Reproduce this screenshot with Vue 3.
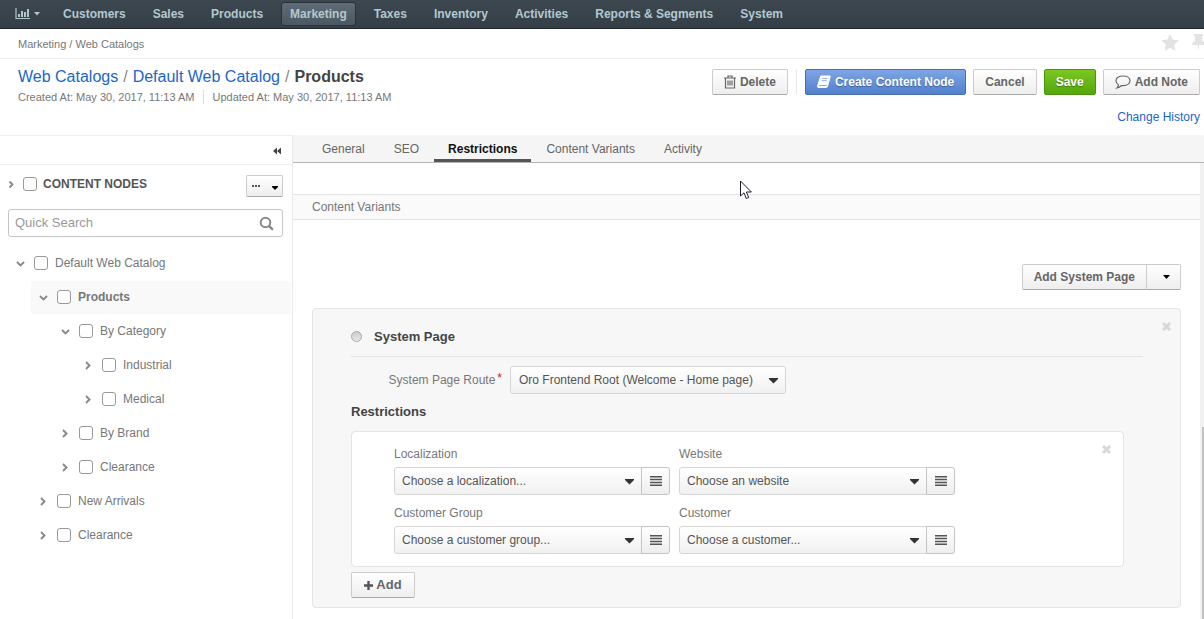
<script setup>
import { ref } from 'vue'

const navItems = ['Customers', 'Sales', 'Products', 'Marketing', 'Taxes', 'Inventory', 'Activities', 'Reports & Segments', 'System']
const activeNav = ref('Marketing')

const tabs = ['General', 'SEO', 'Restrictions', 'Content Variants', 'Activity']
const activeTab = ref('Restrictions')

const nodes = ref([
  { id: 'root', label: 'Default Web Catalog', level: 0, open: true, checked: false },
  { id: 'products', label: 'Products', level: 1, open: true, checked: false, current: true },
  { id: 'by-category', label: 'By Category', level: 2, open: true, checked: false },
  { id: 'industrial', label: 'Industrial', level: 3, open: false, checked: false },
  { id: 'medical', label: 'Medical', level: 3, open: false, checked: false },
  { id: 'by-brand', label: 'By Brand', level: 2, open: false, checked: false },
  { id: 'clearance-products', label: 'Clearance', level: 2, open: false, checked: false },
  { id: 'new-arrivals', label: 'New Arrivals', level: 1, open: false, checked: false },
  { id: 'clearance', label: 'Clearance', level: 1, open: false, checked: false },
])

const restrictions = [
  { id: 'localization', label: 'Localization', placeholder: 'Choose a localization...' },
  { id: 'website', label: 'Website', placeholder: 'Choose an website' },
  { id: 'customer-group', label: 'Customer Group', placeholder: 'Choose a customer group...' },
  { id: 'customer', label: 'Customer', placeholder: 'Choose a customer...' },
]
</script>

<template>
  <div class="page">
    <nav class="topbar" aria-label="Main">
      <button class="dash" type="button" aria-label="Dashboards">
        <svg width="15" height="12" viewBox="0 0 15 12" aria-hidden="true">
          <path d="M1 0v10.5h14" fill="none" stroke="currentColor" stroke-width="1.2" />
          <path d="M3 6h2v3H3zM6 3h2v6H6zM9 4h2v5H9zM12 1h2v8h-2z" fill="currentColor" />
        </svg>
        <svg width="6" height="4" viewBox="0 0 6 4" aria-hidden="true"><path d="M0 0h6L3 3.5z" fill="currentColor" /></svg>
      </button>
      <a v-for="item in navItems" :key="item" href="#" class="nav-item" :class="{ active: item === activeNav }" @click.prevent="activeNav = item">{{ item }}</a>
    </nav>

    <div class="crumbs">
      <span>Marketing / Web Catalogs</span>
      <div class="marks">
        <button type="button" class="plain" aria-label="Favorite">
          <svg width="18" height="17" viewBox="0 0 18 17" aria-hidden="true"><path d="M9 0l2.6 5.6 6.1.8-4.5 4.2 1.2 6.1L9 13.7l-5.4 3 1.2-6.1L.3 6.4l6.1-.8z" fill="#e3e3e3" /></svg>
        </button>
        <button type="button" class="plain pin" aria-label="Pin">
          <svg width="13" height="17" viewBox="0 0 13 17" aria-hidden="true"><path d="M2 0h9v2H10v5c2 .8 3 2.200 3 4H7.300L6.500 17 5.700 11H0C0 9.200 1 7.800 3 7V2H2z" fill="#e3e3e3" /></svg>
        </button>
      </div>
    </div>

    <header class="head">
      <div class="head-text">
        <h1 class="title">
          <a href="#">Web Catalogs</a><span class="sep">/</span><a href="#">Default Web Catalog</a><span class="sep">/</span><strong>Products</strong>
        </h1>
        <div class="meta">
          <span>Created At: May 30, 2017, 11:13 AM</span>
          <span class="meta-next">Updated At: May 30, 2017, 11:13 AM</span>
        </div>
      </div>
      <div class="head-side">
        <div class="actions">
          <button type="button" class="btn">
            <svg width="12" height="14" viewBox="0 0 12 14" aria-hidden="true"><path d="M0 3h12M4 3V1h4v2M1.500 3v10h9V3M4 5.500v5M6 5.500v5M8 5.500v5" fill="none" stroke="#666" stroke-width="1.200" /></svg>
            Delete
          </button>
          <span class="divider"></span>
          <button type="button" class="btn primary">
            <svg width="14" height="14" viewBox="0 0 14 14" aria-hidden="true"><path d="M4.500.5H12c1.500 0 2 .7 1.600 2L11 11.300c-.3 1.100-1 1.700-2 1.700H2C.6 13-.2 11.800.2 10.500L2.900 2C3.200 1 3.700.5 4.500.5z" fill="#fff" /><path d="M5.400 3.500h5M4.700 5.700h5M1.700 10.500h7.200c.6 0 .9-.3 1.100-.9" fill="none" stroke="#8fb0e6" stroke-width="1" /></svg>
            Create Content Node
          </button>
          <button type="button" class="btn">Cancel</button>
          <button type="button" class="btn success">Save</button>
          <button type="button" class="btn">
            <svg width="16" height="14" viewBox="0 0 16 14" aria-hidden="true"><path d="M8 1c4 0 7 2 7 4.800s-3 4.800-7 4.800l-1.500-.1C5.200 11.800 3.800 12.700 2 13c.9-.9 1.300-1.900 1.400-3.200C1.800 8.900 1 7.400 1 5.800 1 3 4 1 8 1z" fill="none" stroke="#666" stroke-width="1.200" /></svg>
            Add Note
          </button>
        </div>
        <a href="#" class="history">Change History</a>
      </div>
    </header>

    <div class="body">
      <aside class="sidebar">
        <div class="collapse">
          <button type="button" class="plain" aria-label="Collapse sidebar">
            <svg width="8" height="8" viewBox="0 0 8 8" aria-hidden="true"><path d="M4 .5v7L0 4zM8 .5v7L4 4z" fill="#444" /></svg>
          </button>
        </div>
        <div class="tree-head">
          <button type="button" class="plain toggle" aria-label="Expand all">
            <svg width="9" height="9" viewBox="0 0 9 9" aria-hidden="true"><path d="M2.500 1.500l3 3-3 3" fill="none" stroke="#888" stroke-width="1.800" /></svg>
          </button>
          <label class="all"><input type="checkbox" class="check" />CONTENT NODES</label>
          <button type="button" class="btn more" aria-label="Tree actions">
            <svg width="8" height="2" viewBox="0 0 8 2" aria-hidden="true"><path d="M0 0h2v2H0zM3 0h2v2H3zM6 0h2v2H6z" fill="#555" /></svg>
            <svg width="6" height="4" viewBox="0 0 6 4" class="more-caret" aria-hidden="true"><path d="M0 0h6v1L3 4 0 1z" fill="#000" /></svg>
          </button>
        </div>
        <div class="search">
          <input type="text" placeholder="Quick Search" aria-label="Quick Search" />
          <button type="button" class="plain" aria-label="Search">
            <svg width="15" height="15" viewBox="0 0 15 15" aria-hidden="true"><circle cx="6.500" cy="6.500" r="4.800" fill="none" stroke="#8a8a8a" stroke-width="2" /><path d="M10.200 10.200l3 3" stroke="#8a8a8a" stroke-width="2.400" stroke-linecap="round" /></svg>
          </button>
        </div>
        <ul class="tree">
          <li v-for="node in nodes" :key="node.id" class="node" :class="['level-' + node.level, { current: node.current }]">
            <button type="button" class="plain toggle" :aria-label="'Toggle ' + node.label" @click="node.open = !node.open">
              <svg width="9" height="9" viewBox="0 0 9 9" aria-hidden="true"><path :d="node.open ? 'M1 3l3.500 3.500L8 3' : 'M2 1l3.500 3.500L2 8'" fill="none" stroke="#888" stroke-width="1.900" /></svg>
            </button>
            <label><input v-model="node.checked" type="checkbox" class="check" />{{ node.label }}</label>
          </li>
        </ul>
      </aside>

      <main class="main">
        <nav class="tabs" aria-label="Sections">
          <a v-for="tab in tabs" :key="tab" href="#" class="tab" :class="{ active: tab === activeTab }" @click.prevent="activeTab = tab">{{ tab }}</a>
        </nav>
        <div class="scroll">
          <div class="content">
            <h2 class="section">Content Variants</h2>
            <div class="variants">
              <div class="add-page">
                <button type="button" class="btn">Add System Page</button>
                <button type="button" class="btn drop" aria-label="More page types">
                  <svg width="7" height="4" viewBox="0 0 7 4" aria-hidden="true"><path d="M0 0h7L3.500 4z" fill="#000" /></svg>
                </button>
              </div>
              <section class="panel">
                <button type="button" class="plain close" aria-label="Remove variant">
                  <svg width="9" height="9" viewBox="0 0 9 9" aria-hidden="true"><path d="M1 1l7 7M8 1L1 8" stroke="#d8d8d8" stroke-width="3" /></svg>
                </button>
                <label class="variant"><input type="radio" name="variant" class="radio" />System Page</label>
                <div class="route">
                  <label for="route">System Page Route<em>*</em></label>
                  <div class="select">
                    <select id="route"><option>Oro Frontend Root (Welcome - Home page)</option></select>
                    <svg width="9" height="6" viewBox="0 0 9 6" aria-hidden="true"><path d="M0 0h9v1L4.500 5.500 0 1z" fill="#333" /></svg>
                  </div>
                </div>
                <h3 class="sub">Restrictions</h3>
                <div class="box">
                  <button type="button" class="plain close" aria-label="Remove restriction">
                    <svg width="9" height="9" viewBox="0 0 9 9" aria-hidden="true"><path d="M1 1l7 7M8 1L1 8" stroke="#d8d8d8" stroke-width="3" /></svg>
                  </button>
                  <div v-for="field in restrictions" :key="field.id" class="field">
                    <label :for="field.id">{{ field.label }}</label>
                    <div class="group">
                      <div class="select">
                        <select :id="field.id"><option>{{ field.placeholder }}</option></select>
                        <svg width="9" height="6" viewBox="0 0 9 6" aria-hidden="true"><path d="M0 0h9v1L4.500 5.500 0 1z" fill="#333" /></svg>
                      </div>
                      <button type="button" class="list" :aria-label="'Browse ' + field.label">
                        <svg width="12" height="10" viewBox="0 0 12 10" aria-hidden="true"><path d="M0 .8h12M0 3.600h12M0 6.400h12M0 9.200h12" stroke="#555" stroke-width="1.500" /></svg>
                      </button>
                    </div>
                  </div>
                </div>
                <button type="button" class="btn add">
                  <svg width="9" height="9" viewBox="0 0 9 9" aria-hidden="true"><path d="M4.500 0v9M0 4.500h9" stroke="#555" stroke-width="2.400" /></svg>Add
                </button>
              </section>
            </div>
          </div>
          <div class="track"><div class="thumb"></div></div>
        </div>
      </main>
    </div>

    <svg class="pointer" width="13" height="20" viewBox="0 0 13 20" aria-hidden="true"><path d="M.5 1v15l3.500-3.200L6.300 18.500l2.400-1L6.400 12h5z" fill="#fff" stroke="#1d1d2b" stroke-width="1" /></svg>
  </div>
</template>

<style>
body {
  background: #fff;
}
</style>

<style scoped>
.page {
  display: flex;
  flex-direction: column;
  min-height: 100vh;
  position: relative;
  overflow-x: hidden;
  font: 12px/20px "Liberation Sans", Arial, sans-serif;
  color: #777;
}
.page * {
  box-sizing: border-box;
}
a {
  color: #1a66c8;
  text-decoration: none;
}
button,
input,
select {
  font: inherit;
  margin: 0;
}
svg {
  flex: none;
  display: block;
}
.plain {
  border: 0;
  padding: 0;
  background: none;
  display: flex;
}

.topbar {
  display: flex;
  align-items: center;
  gap: 9px;
  height: 29px;
  padding: 0 15px;
  background: linear-gradient(#3c474f, #343f48);
  border-bottom: 1px solid #1e272e;
  font-weight: bold;
}
.dash {
  display: flex;
  align-items: center;
  gap: 4px;
  width: 30px;
  padding: 0;
  border: 0;
  background: none;
  color: #b4c4cc;
}
.nav-item {
  padding: 1px 8px;
  border: 1px solid transparent;
  border-radius: 3px;
  color: #b4c8d0;
  white-space: nowrap;
}
.nav-item.active {
  background: linear-gradient(#5f6c77, #4b5761);
  border-color: #28323a;
}

.crumbs {
  display: flex;
  justify-content: space-between;
  align-items: center;
  height: 30px;
  padding-left: 18px;
  border-bottom: 1px solid #eee;
  font-size: 11px;
}
.marks {
  display: flex;
  gap: 13px;
  padding-bottom: 2px;
}
.pin {
  margin-right: -1px;
}

.head {
  display: flex;
  justify-content: space-between;
  height: 76px;
  padding: 8px 4px 0 18px;
}
.title {
  margin: 0;
  font-size: 16px;
  font-weight: normal;
  line-height: 20px;
}
.title strong {
  color: #444;
}
.sep {
  margin: 0 5px;
  color: #888;
}
.meta {
  display: flex;
  font-size: 11px;
  line-height: 14px;
  margin-top: 3px;
}
.meta-next {
  margin-left: 8px;
  padding-left: 9px;
  border-left: 1px solid #ddd;
}
.head-side {
  display: flex;
  flex-direction: column;
  align-items: flex-end;
  gap: 12px;
  padding-top: 2px;
}
.actions {
  display: flex;
  gap: 7px;
}
.divider {
  width: 1px;
  margin: 1px;
  background: #e6e6e6;
}
.btn {
  display: flex;
  align-items: center;
  justify-content: center;
  gap: 4px;
  height: 26px;
  padding: 0 11px;
  border: 1px solid #ccc;
  border-bottom-color: #aaa;
  border-radius: 2px;
  background: linear-gradient(#fff, #eee);
  color: #666;
  font-weight: bold;
  white-space: nowrap;
}
.btn.primary {
  background: linear-gradient(#7ea5e6, #5280cb);
  border-color: #4a6ea8;
  color: #fff;
  text-shadow: 0 1px 1px #3a5f9c;
}
.btn.success {
  background: linear-gradient(#7bc820, #55a60c);
  border-color: #4a940f;
  color: #fff;
  text-shadow: 0 1px 1px #3c7a08;
}

.body {
  display: flex;
  flex: 1;
}
.sidebar {
  width: 293px;
  flex: none;
  border-top: 1px solid #eee;
  border-right: 1px solid #e8e8e8;
}
.collapse {
  display: flex;
  justify-content: flex-end;
  align-items: center;
  height: 29px;
  padding: 2px 11px 0 0;
  border-bottom: 1px solid #eee;
}
.tree-head {
  display: flex;
  align-items: center;
  height: 44px;
  padding: 0 9px 6px 7px;
}
.toggle {
  width: 16px;
}
.all,
.node label {
  display: flex;
  align-items: center;
  gap: 7px;
}
.all {
  flex: 1;
  gap: 6px;
  font-weight: bold;
  color: #555;
}
.check {
  appearance: none;
  width: 14px;
  height: 14px;
  border: 1px solid #999;
  border-radius: 3px;
  background: #fff;
}
.check:checked {
  background: #999;
}
.btn.more {
  gap: 12px;
  width: 37px;
  height: 22px;
  padding: 0;
  margin-top: 4px;
}
.more-caret {
  margin-top: 4px;
}
.search {
  display: flex;
  align-items: center;
  height: 28px;
  margin: 0 9px 0 8px;
  padding: 0 8px 0 6px;
  border: 1px solid #c4c4c4;
  border-radius: 3px;
}
.search input {
  flex: 1;
  min-width: 0;
  padding: 0;
  border: 0;
  outline: 0;
  font-size: 13px;
  color: #555;
}
.search input::placeholder {
  color: #999;
  opacity: 1;
}
.tree {
  list-style: none;
  margin: 10px 0 0;
  padding: 0;
}
.node {
  display: flex;
  align-items: center;
  height: 33px;
  margin: 1px 1px 0 8px;
  padding: 0 0 1px 8px;
}
.node .toggle {
  width: 18px;
  padding-top: 1px;
}
.level-1 {
  margin-left: 31px;
}
.level-2 {
  margin-left: 53px;
}
.level-3 {
  margin-left: 76px;
}
.current {
  background: #f9f9f9;
  font-weight: bold;
}

.main {
  display: flex;
  flex-direction: column;
  flex: 1;
  min-width: 0;
}
.tabs {
  display: flex;
  gap: 1px;
  height: 28px;
  padding-left: 15px;
  background: #f5f5f5;
  border-bottom: 1px solid #b5b5b5;
}
.tab {
  padding: 4px 14px 0;
  border-bottom: 3px solid transparent;
  color: #666;
}
.tab.active {
  border-bottom-color: #555;
  color: #111;
  font-weight: bold;
}
.scroll {
  display: flex;
  flex: 1;
}
.content {
  flex: 1;
  min-width: 0;
  padding-top: 31px;
}
.section {
  margin: 0;
  padding: 2px 19px;
  border: solid #e4e4e4;
  border-width: 1px 0;
  background: #fafafa;
  font-size: 12px;
  font-weight: normal;
  line-height: 20px;
}
.variants {
  padding: 44px 19px 11px;
}
.add-page {
  display: flex;
  justify-content: flex-end;
}
.add-page .btn:first-child {
  border-radius: 2px 0 0 2px;
}
.btn.drop {
  width: 35px;
  margin-left: -1px;
  padding: 0 0 0 5px;
  border-radius: 0 2px 2px 0;
}
.panel {
  position: relative;
  margin-top: 18px;
  padding: 0 37px 9px 38px;
  border: 1px solid #e4e4e4;
  border-radius: 4px;
  background: #f7f7f7;
}
.close {
  position: absolute;
  top: 13px;
  right: 9px;
}
.variant {
  display: flex;
  align-items: center;
  gap: 12px;
  height: 48px;
  padding-top: 8px;
  border-bottom: 1px solid #e4e4e4;
  font-size: 13px;
  font-weight: bold;
  color: #444;
}
.radio {
  appearance: none;
  width: 11px;
  height: 11px;
  border: 1px solid #a8a8a8;
  border-radius: 50%;
  background: linear-gradient(#ccc, #e8e8e8);
}
.radio:checked {
  background: #666;
}
.route {
  display: flex;
  align-items: center;
  gap: 8px;
  margin-top: 9px;
}
.route > label {
  width: 151px;
  text-align: right;
}
.route .select {
  flex: 0 1 276px;
}
.route select {
  color: #444;
}
em {
  color: #c22;
  font-style: normal;
  margin-left: 2px;
  vertical-align: 2px;
  line-height: 12px;
}
.select {
  position: relative;
  flex: 1;
  min-width: 0;
}
.select select {
  appearance: none;
  display: block;
  width: 100%;
  height: 28px;
  padding: 0 20px 0 8px;
  border: 1px solid #d6d6d6;
  border-radius: 3px;
  background: linear-gradient(#fff, #f1f1f1);
  color: #555;
}
.select svg {
  position: absolute;
  top: 12px;
  right: 8px;
  pointer-events: none;
}
.sub {
  margin: 8px 0 9px;
  font-size: 13px;
  line-height: 20px;
  color: #444;
}
.box {
  position: relative;
  display: grid;
  grid-template-columns: repeat(2, minmax(0, 276px));
  gap: 8px 9px;
  margin-right: 19px;
  padding: 12px 42px;
  border: 1px solid #e4e4e4;
  border-radius: 4px;
  background: #fff;
}
.box .close {
  right: 12px;
}
.field label {
  display: block;
  margin-bottom: 3px;
}
.group {
  display: flex;
}
.group .select select {
  padding-left: 7px;
  border-radius: 3px 0 0 3px;
}
.list {
  display: flex;
  align-items: center;
  justify-content: center;
  width: 29px;
  height: 28px;
  margin-left: -1px;
  padding: 0;
  border: 1px solid #c4c4c4;
  border-radius: 0 3px 3px 0;
  background: linear-gradient(#fff, #eee);
  position: relative;
}
.btn.add {
  gap: 3px;
  width: 64px;
  margin-top: 5px;
  font-size: 13px;
  padding: 0;
}

.track {
  width: 4px;
  display: flex;
  flex-direction: column;
  justify-content: flex-end;
  align-items: flex-end;
  background: #f1f1f1;
}
.thumb {
  width: 2px;
  height: 42%;
  background: #c1c1c1;
}

.pointer {
  position: absolute;
  left: 740px;
  top: 180px;
  pointer-events: none;
}
</style>
